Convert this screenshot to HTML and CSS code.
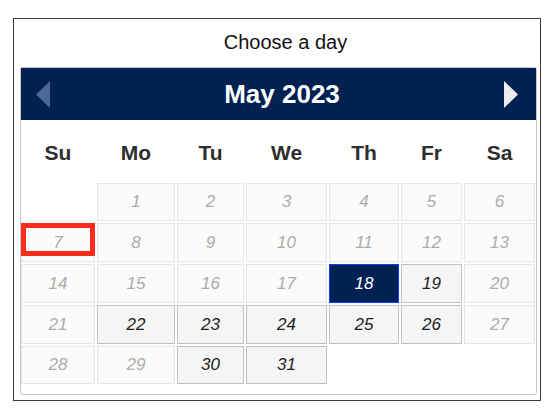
FILE: index.html
```html
<!DOCTYPE html>
<html lang="en">
<head>
<meta charset="utf-8">
<title>Choose a day</title>
<link rel="stylesheet" href="styles.css">
</head>
<body>
<div class="frame">
  <div class="title">Choose a day</div>
  <div class="picker">
    <div class="head">
      <span class="nav prev"><svg width="14" height="27" viewBox="0 0 14 27"><polygon points="14,0 0,13.5 14,27" fill="#4d6891"/></svg></span>
      <span class="month">May 2023</span>
      <span class="nav next"><svg width="14" height="27" viewBox="0 0 14 27"><polygon points="0,0 14,13.5 0,27" fill="#ececec"/></svg></span>
    </div>
    <div class="names">
      <div>Su</div><div>Mo</div><div>Tu</div><div>We</div><div>Th</div><div>Fr</div><div>Sa</div>
    </div>
    <div class="days">
      <div class="blank"></div>
      <div class="d off">1</div>
      <div class="d off">2</div>
      <div class="d off">3</div>
      <div class="d off">4</div>
      <div class="d off">5</div>
      <div class="d off">6</div>

      <div class="d off marked">7<span class="mark"></span></div>
      <div class="d off">8</div>
      <div class="d off">9</div>
      <div class="d off">10</div>
      <div class="d off">11</div>
      <div class="d off">12</div>
      <div class="d off">13</div>

      <div class="d off">14</div>
      <div class="d off">15</div>
      <div class="d off">16</div>
      <div class="d off">17</div>
      <div class="d sel">18</div>
      <div class="d on">19</div>
      <div class="d off">20</div>

      <div class="d off">21</div>
      <div class="d on">22</div>
      <div class="d on">23</div>
      <div class="d on">24</div>
      <div class="d on">25</div>
      <div class="d on">26</div>
      <div class="d off">27</div>

      <div class="d off">28</div>
      <div class="d off">29</div>
      <div class="d on">30</div>
      <div class="d on">31</div>
      <div class="blank"></div>
      <div class="blank"></div>
      <div class="blank"></div>
    </div>
  </div>
</div>
</body>
</html>
```
FILE: styles.css
```css
html, body {
  margin: 0;
  padding: 0;
  background: #ffffff;
}
body {
  font-family: "Liberation Sans", Arial, sans-serif;
  color: #222;
}
.frame {
  box-sizing: border-box;
  width: 528px;
  height: 383px;
  margin: 18px 0 0 13px;
  border: 1px solid #3c3c3c;
  padding: 0 3px 0 6px;
}
.title {
  height: 48px;
  line-height: 46px;
  font-size: 20px;
  text-align: center;
  padding-left: 14px;
  color: #111;
}
.picker {
  box-sizing: border-box;
  width: 517px;
  border: 1px solid #c5c5c5;
  border-radius: 3px;
  padding: 0 1px 10px 0;
}
.head {
  display: flex;
  align-items: center;
  height: 52px;
  background: #002152;
  padding: 0 18px 0 15px;
  margin-right: -1px;
}
.nav {
  display: flex;
  width: 14px;
  height: 27px;
}
.month {
  flex: 1;
  text-align: center;
  color: #fff;
  font-weight: bold;
  font-size: 26px;
  line-height: 52px;
  padding-left: 10px;
}
.names,
.days {
  display: grid;
  grid-template-columns: 74px 78px 67px 81px 70px 61px 71px;
  column-gap: 2px;
}
.names {
  height: 63px;
}
.names div {
  padding-top: 3px;
  line-height: 60px;
  text-align: center;
  font-weight: bold;
  font-size: 21px;
  color: #2e2e2e;
}
.days {
  grid-template-rows: 38px 39px 39px 39px 38px;
  row-gap: 2px;
}
.d {
  position: relative;
  box-sizing: border-box;
  border: 1px solid;
  display: flex;
  align-items: center;
  justify-content: center;
  font-style: italic;
  font-size: 17px;
}
.off {
  background: #fbfbfb;
  border-color: #e6e6e6;
  color: #acacac;
}
.on {
  background: #f5f5f5;
  border-color: #c2c2c2;
  color: #1e1e1e;
}
.sel {
  background: #002152;
  border-color: #0a3fff;
  color: #fff;
}
.mark {
  position: absolute;
  left: -1px;
  top: -1px;
  width: 74px;
  height: 33px;
  box-sizing: border-box;
  border: 5px solid #fb2b1d;
}
```
